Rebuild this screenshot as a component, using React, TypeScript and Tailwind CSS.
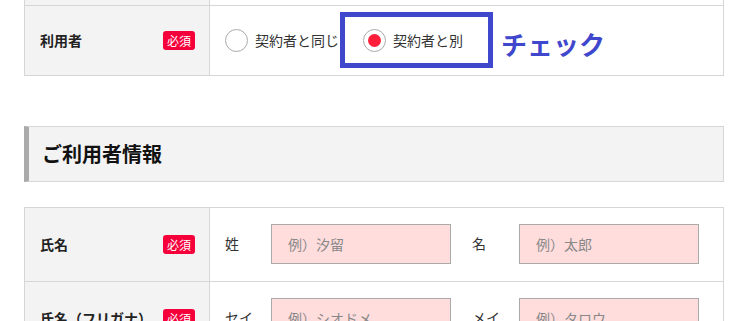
import React from "react";

const font = { fontFamily: '"Noto Sans CJK JP", "Noto Sans", sans-serif' };

function Badge() {
  return (
    <span className="inline-flex items-center justify-center w-[32px] h-[19px] rounded-[3px] bg-[#f5003b] text-white text-[12px] leading-none">
      必須
    </span>
  );
}

function LabelCell({ text }: { text: string }) {
  return (
    <div className="w-[186px] shrink-0 flex items-center justify-between bg-[#f3f3f3] border-l border-r border-[#d6d6d6] pl-[15px] pr-[14px]">
      <span className="text-[14px] font-bold text-[#222]">{text}</span>
      <Badge />
    </div>
  );
}

function Field({ placeholder }: { placeholder: string }) {
  return (
    <input
      readOnly
      placeholder={placeholder}
      className="w-[180px] h-[40px] border border-[#aaaaaa] bg-[#ffdddd] pl-[16px] text-[14px] placeholder:text-[#888] outline-none"
      style={font}
    />
  );
}

function NameRow({ label, a, b, pa, pb }: { label: string; a: string; b: string; pa: string; pb: string }) {
  return (
    <div className="flex h-[74px] border-b border-[#d6d6d6]">
      <LabelCell text={label} />
      <div className="flex-1 flex items-center border-r border-[#d6d6d6] pl-[15px] pb-[2px] text-[14px] text-[#333]">
        <span className="w-[46px]">{a}</span>
        <Field placeholder={pa} />
        <span className="w-[47px] ml-[21px]">{b}</span>
        <Field placeholder={pb} />
      </div>
    </div>
  );
}

export default function App() {
  return (
    <div className="relative w-[732px] h-[321px] overflow-hidden bg-white" style={font}>
      <div className="ml-[24px] w-[700px]">
        {/* Table 1 */}
        <div className="flex h-[5px]">
          <div className="w-[186px] shrink-0 bg-[#f3f3f3] border-l border-r border-[#d6d6d6]" />
          <div className="flex-1 border-r border-[#d6d6d6]" />
        </div>
        <div className="flex h-[71px] border-t border-b border-[#d6d6d6]">
          <LabelCell text="利用者" />
          <div className="flex-1 flex items-center border-r border-[#d6d6d6] pl-[15px] text-[14px] text-[#333]">
            <div className="flex items-center">
              <span className="w-[23px] h-[23px] rounded-full border border-[#aaaaaa] bg-white" />
              <span className="ml-[7px]">契約者と同じ</span>
            </div>
            <div className="flex items-center ml-[24px]">
              <span className="w-[23px] h-[23px] rounded-full border border-[#aaaaaa] bg-white flex items-center justify-center">
                <span className="w-[13px] h-[13px] rounded-full bg-[#ff1f3b]" />
              </span>
              <span className="ml-[7px]">契約者と別</span>
            </div>
          </div>
        </div>

        {/* Section heading */}
        <div className="mt-[50px] h-[56px] flex items-center bg-[#f3f3f3] border border-l-[5px] border-[#d6d6d6] border-l-[#aaaaaa] pl-[13px]">
          <h2 className="text-[20px] font-bold text-[#111]">ご利用者情報</h2>
        </div>

        {/* Table 2 */}
        <div className="mt-[25px] border-t border-[#d6d6d6]">
          <NameRow label="氏名" a="姓" b="名" pa="例）汐留" pb="例）太郎" />
          <NameRow label="氏名（フリガナ）" a="セイ" b="メイ" pa="例）シオドメ" pb="例）タロウ" />
        </div>
      </div>

      {/* Annotation overlay */}
      <div className="absolute left-[340px] top-[12px] w-[153px] h-[56px] border-[5px] border-[#3f48cc]" />
      <div className="absolute left-[501px] top-[28px] text-[26px] leading-[31px] font-bold text-[#3f48cc]">チェック</div>
    </div>
  );
}
